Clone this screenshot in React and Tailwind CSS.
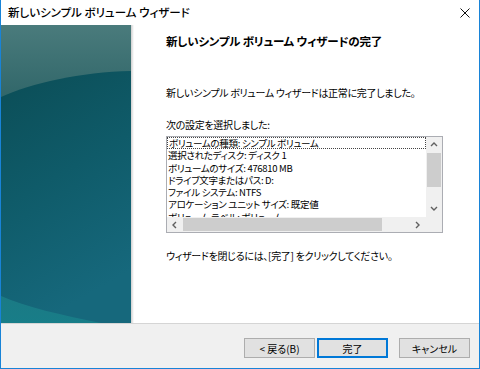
import React from "react"

const font = "font-['Noto_Sans_CJK_JP',sans-serif] [font-feature-settings:'palt']"

const items = [
  "ボリュームの種類: シンプル ボリューム",
  "選択されたディスク: ディスク 1",
  "ボリュームのサイズ: 476810 MB",
  "ドライブ文字またはパス: D:",
  "ファイル システム: NTFS",
  "アロケーション ユニット サイズ: 既定値",
  "ボリューム ラベル: ボリューム",
]

function Banner() {
  return (
    <svg width="130" height="298" viewBox="0 0 130 298" className="block">
      <defs>
        <linearGradient id="top" x1="0" y1="0" x2="0" y2="1">
          <stop offset="0" stopColor="#4a7b7c" />
          <stop offset="0.25" stopColor="#306669" />
          <stop offset="1" stopColor="#187d88" />
        </linearGradient>
        <linearGradient id="core" x1="0" y1="0" x2="0.3" y2="1">
          <stop offset="0" stopColor="#0b4d56" />
          <stop offset="0.5" stopColor="#0f5b69" />
          <stop offset="1" stopColor="#16687c" />
        </linearGradient>
      </defs>
      <rect width="130" height="298" fill="url(#top)" />
      <path d="M0,72 C30,58 80,47 130,46 L130,298 L100,298 C60,290 25,282 0,271 Z" fill="url(#core)" />
    </svg>
  )
}

function Chevron({ dir }) {
  const d = {
    up: "M1,5 L4,2 L7,5",
    down: "M1,2 L4,5 L7,2",
    left: "M5,1 L2,4 L5,7",
    right: "M2,1 L5,4 L2,7",
  }[dir]
  return (
    <svg width="8" height="8" viewBox="0 0 8 8">
      <path d={d} fill="none" stroke="#606060" strokeWidth="1.4" />
    </svg>
  )
}

function ListBox() {
  return (
    <div className="w-[277px] h-[97px] border border-[#abadb3] bg-white flex flex-col">
      <div className="flex h-[80px]">
        <div className="flex-1 overflow-hidden">
          {items.map((t, i) => (
            <div
              key={i}
              className={`h-[12.3px] text-[9.5px] tracking-[-0.3px] pl-[1px] whitespace-nowrap ${
                i === 0 ? "border border-dotted border-[#444] leading-[10.3px]" : "leading-[12.3px]"
              }`}
            >
              {t}
            </div>
          ))}
        </div>
        <div className="w-[16px] bg-[#f0f0f0] flex flex-col">
          <div className="h-[16px] flex items-center justify-center"><Chevron dir="up" /></div>
          <div className="h-[34px] mx-[1px] bg-[#cdcdcd]" />
          <div className="flex-1" />
          <div className="h-[16px] flex items-center justify-center"><Chevron dir="down" /></div>
        </div>
      </div>
      <div className="flex h-[15px] bg-[#f0f0f0]">
        <div className="flex-1 flex">
          <div className="w-[16px] flex items-center justify-center"><Chevron dir="left" /></div>
          <div className="w-[199px] my-[1px] bg-[#cdcdcd]" />
          <div className="flex-1" />
          <div className="w-[16px] flex items-center justify-center"><Chevron dir="right" /></div>
        </div>
        <div className="w-[16px] bg-[#f0f0f0]" />
      </div>
    </div>
  )
}

function Btn({ label, primary }) {
  return (
    <button
      className={`w-[71px] h-[20px] bg-[#e1e1e1] text-[10px] text-black flex items-center justify-center border ${
        primary ? "border-[#0078d7] shadow-[inset_0_0_0_1px_#0078d7]" : "border-[#adadad]"
      }`}
    >
      {label}
    </button>
  )
}

export default function App() {
  return (
    <div className={`w-[480px] h-[369px] bg-white border-x border-b border-[#1883d7] flex flex-col text-black ${font}`}>
      {/* タイトルバー */}
      <div className="h-[25px] flex items-center justify-between pl-[7px] pr-[9px]">
        <span className="text-[11.5px] font-medium">新しいシンプル ボリューム ウィザード</span>
        <svg width="10" height="10" viewBox="0 0 10 10">
          <path d="M0.5,0.5 L9.5,9.5 M9.5,0.5 L0.5,9.5" stroke="#111" strokeWidth="1" />
        </svg>
      </div>

      <div className="flex-1 flex">
        <Banner />
        <div className="w-[3px] bg-gradient-to-r from-[#cfcfcf] to-white" />
        <div className="flex-1 pl-[32px]">
          <div className="mt-[8px] text-[11.5px] font-bold leading-[16px] tracking-[-0.2px]">新しいシンプル ボリューム ウィザードの完了</div>
          <div className="mt-[37px] text-[10px] leading-[14px] tracking-[-0.3px]">新しいシンプル ボリューム ウィザードは正常に完了しました。</div>
          <div className="mt-[18px] text-[10px] leading-[14px] tracking-[-0.3px]">次の設定を選択しました:</div>
          <div className="mt-[4px]">
            <ListBox />
          </div>
          <div className="mt-[16px] text-[10px] leading-[14px] tracking-[-0.3px]">ウィザードを閉じるには、[完了] をクリックしてください。</div>
        </div>
      </div>

      <div className="h-px bg-[#d5d5d5]" />
      <div className="h-[44px] bg-[#f0f0f0] flex justify-end items-start pt-[14px] pr-[9px]">
        <Btn label="< 戻る(B)" />
        <div className="w-[2px]" />
        <Btn label="完了" primary />
        <div className="w-[11px]" />
        <Btn label="キャンセル" />
      </div>
    </div>
  )
}
